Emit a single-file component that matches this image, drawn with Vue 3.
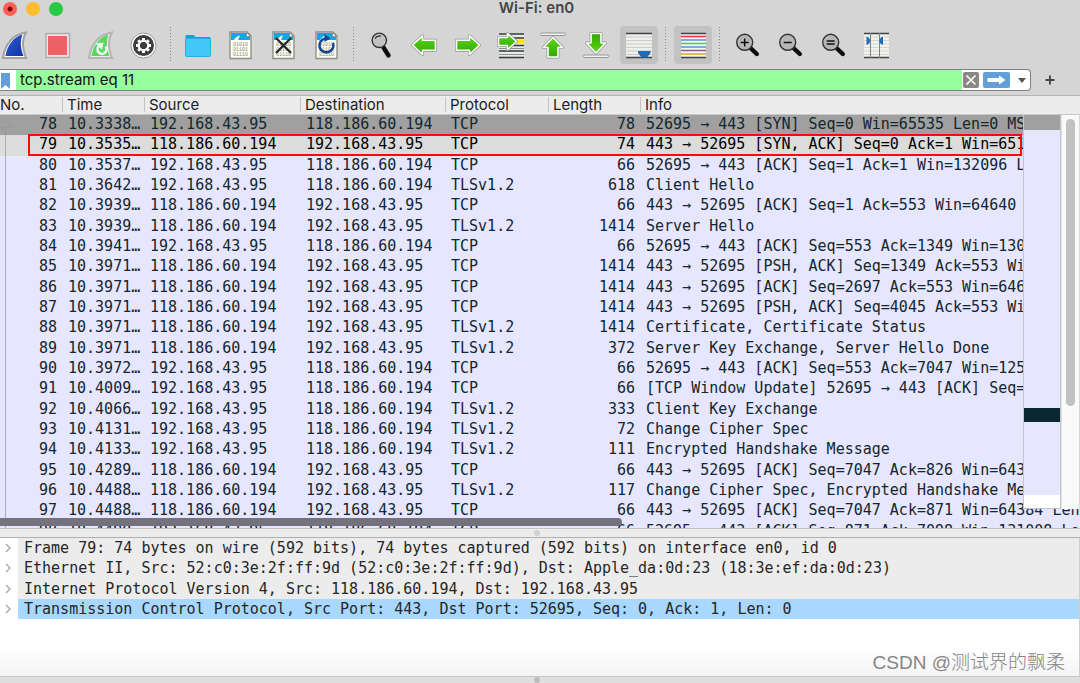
<script setup>
import { ref } from 'vue'

const filter = ref('tcp.stream eq 11')

const A = '192.168.43.95'
const B = '118.186.60.194'
const packets = [
  [78, '10.3338…', A, B, 'TCP', 78, '52695 → 443 [SYN] Seq=0 Win=65535 Len=0 MSS=1460'],
  [79, '10.3535…', B, A, 'TCP', 74, '443 → 52695 [SYN, ACK] Seq=0 Ack=1 Win=65160 Len=0'],
  [80, '10.3537…', A, B, 'TCP', 66, '52695 → 443 [ACK] Seq=1 Ack=1 Win=132096 Len=0'],
  [81, '10.3642…', A, B, 'TLSv1.2', 618, 'Client Hello'],
  [82, '10.3939…', B, A, 'TCP', 66, '443 → 52695 [ACK] Seq=1 Ack=553 Win=64640 Len=0'],
  [83, '10.3939…', B, A, 'TLSv1.2', 1414, 'Server Hello'],
  [84, '10.3941…', A, B, 'TCP', 66, '52695 → 443 [ACK] Seq=553 Ack=1349 Win=130752'],
  [85, '10.3971…', B, A, 'TCP', 1414, '443 → 52695 [PSH, ACK] Seq=1349 Ack=553 Win=64640'],
  [86, '10.3971…', B, A, 'TCP', 1414, '443 → 52695 [ACK] Seq=2697 Ack=553 Win=64640'],
  [87, '10.3971…', B, A, 'TCP', 1414, '443 → 52695 [PSH, ACK] Seq=4045 Ack=553 Win=64640'],
  [88, '10.3971…', B, A, 'TLSv1.2', 1414, 'Certificate, Certificate Status'],
  [89, '10.3971…', B, A, 'TLSv1.2', 372, 'Server Key Exchange, Server Hello Done'],
  [90, '10.3972…', A, B, 'TCP', 66, '52695 → 443 [ACK] Seq=553 Ack=7047 Win=125376'],
  [91, '10.4009…', A, B, 'TCP', 66, '[TCP Window Update] 52695 → 443 [ACK] Seq=553'],
  [92, '10.4066…', A, B, 'TLSv1.2', 333, 'Client Key Exchange'],
  [93, '10.4131…', A, B, 'TLSv1.2', 72, 'Change Cipher Spec'],
  [94, '10.4133…', A, B, 'TLSv1.2', 111, 'Encrypted Handshake Message'],
  [95, '10.4289…', B, A, 'TCP', 66, '443 → 52695 [ACK] Seq=7047 Ack=826 Win=64384 Len=0'],
  [96, '10.4488…', B, A, 'TLSv1.2', 117, 'Change Cipher Spec, Encrypted Handshake Message'],
  [97, '10.4488…', B, A, 'TCP', 66, '443 → 52695 [ACK] Seq=7047 Ack=871 Win=64384 Len=0'],
  [98, '10.4490…', A, B, 'TCP', 66, '52695 → 443 [ACK] Seq=871 Ack=7098 Win=131008 Len=0'],
]

const details = [
  'Frame 79: 74 bytes on wire (592 bits), 74 bytes captured (592 bits) on interface en0, id 0',
  'Ethernet II, Src: 52:c0:3e:2f:ff:9d (52:c0:3e:2f:ff:9d), Dst: Apple_da:0d:23 (18:3e:ef:da:0d:23)',
  'Internet Protocol Version 4, Src: 118.186.60.194, Dst: 192.168.43.95',
  'Transmission Control Protocol, Src Port: 443, Dst Port: 52695, Seq: 0, Ack: 1, Len: 0',
]

const tools = [
  'start', 'stop', 'restart', 'options', '|',
  'open', 'save', 'close', 'reload', '|',
  'find', 'back', 'forward', 'goto', 'first', 'last', 'autoscroll', '|',
  'colorize', '|',
  'zoom in', 'zoom out', 'zoom reset', 'resize columns',
]
const pressed = ['autoscroll', 'colorize']
const teeth = [0, 45, 90, 135, 180, 225, 270, 315]
const stripes = [
  [10.5, '#fb2c36'], [14, '#5a93cf'], [17.5, '#4fd022'],
  [21, '#5a93cf'], [24.5, '#8c5a93'], [28, '#d9a628'],
]
</script>

<template>
  <div class="window">
    <header class="titlebar">
      <div class="lights">
        <button class="light red" aria-label="Close window"></button>
        <button class="light amber" aria-label="Minimize window"></button>
        <button class="light green" aria-label="Zoom window"></button>
      </div>
      <h1>Wi-Fi: en0</h1>
    </header>

    <nav class="toolbar">
      <template v-for="(t, i) in tools" :key="i">
        <span v-if="t === '|'" class="sep"></span>
        <button v-else class="tool" :class="{ pressed: pressed.includes(t) }" :aria-label="t">
          <svg viewBox="0 0 38 38" width="38" height="38" fill="none">
            <defs v-if="t === 'start'">
              <linearGradient id="blue" x1="0" y1="0" x2="1" y2="1">
                <stop offset="0" stop-color="#2f62cf" /><stop offset="1" stop-color="#1030a8" />
              </linearGradient>
              <linearGradient id="leaf" x1="0" y1="0" x2="0" y2="1">
                <stop offset="0" stop-color="#5fd615" /><stop offset="1" stop-color="#2fa800" />
              </linearGradient>
            </defs>

            <g v-if="t === 'start' || t === 'restart'">
              <path d="M7 32 C9 18 17 8 30 6.5 C26 13 26 23 30 32 Z" :stroke="t === 'start' ? '#a2a2a2' : '#b4b4b4'" stroke-width="2" :fill="t === 'start' ? '#fff' : '#ececec'" />
              <path d="M9.5 30 C11 19 18 10.5 26.5 8.5 C24 15 24.5 23 27.5 30 Z" :fill="t === 'start' ? 'url(#blue)' : '#56d95e'" />
              <g v-if="t === 'restart'">
                <path d="M16.500 20.500 A4.500 4.500 0 1 0 23.500 20.500" stroke="#f4f4f4" stroke-width="2.600" />
                <path d="M13.500 17.500 L21.500 16.500 L20 24 Z" fill="#f4f4f4" />
              </g>
            </g>

            <g v-else-if="t === 'stop'">
              <rect x="7" y="7.5" width="23.5" height="24" fill="#e6e6e6" stroke="#aaa" stroke-width="1.4" />
              <rect x="9" y="10" width="19" height="19" fill="#ec6266" />
            </g>

            <g v-else-if="t === 'options'">
              <circle cx="18.5" cy="19.5" r="12.5" fill="#fff" stroke="#999" />
              <circle cx="18.5" cy="19.5" r="10.5" fill="#3c3c3c" />
              <rect v-for="a in teeth" :key="a" x="17" y="12" width="3" height="4" fill="#fff" :transform="`rotate(${a} 18.5 19.5)`" />
              <circle cx="18.5" cy="19.5" r="4.9" stroke="#fff" stroke-width="1.8" />
            </g>

            <g v-else-if="t === 'open'">
              <path d="M6.5 10 q0 -1 1 -1 h7 l2 2 h14 q1 0 1 1 v4 h-25 z" fill="#1ba0d6" />
              <rect x="6.5" y="12.5" width="25" height="18" rx="1" fill="#44c8fb" stroke="#27aee4" />
            </g>

            <g v-else-if="['save', 'close', 'reload'].includes(t)">
              <path d="M8 6 H25 L29 10 V32.5 H8 Z" fill="#fefdf0" stroke="#8f9088" stroke-width="1.4" />
              <path d="M9 7 H24 L28 11 V14 H16 L18 9.5 Q14 10 12 14 H9 Z" fill="#16a5e3" />
              <path d="M24.5 6.5 V10.5 H28.5 Z" fill="#fff" stroke="#8f9088" />
              <g class="bits">
                <text x="11" y="20">01010</text>
                <text x="11" y="25">01101</text>
                <text x="11" y="30">01110</text>
              </g>
              <path v-if="t === 'close'" d="M11 12 L26 27 M26 12 L11 27" stroke="#252a2e" stroke-width="2.3" />
              <g v-if="t === 'reload'">
                <path d="M25 17 A7 7 0 1 1 17 12.500" stroke="#154690" stroke-width="2.500" />
                <path d="M16.500 8 L22.500 12.500 L16.500 16 Z" fill="#154690" />
              </g>
            </g>

            <g v-else-if="t === 'find'">
              <path d="M21.5 21.5 L26.5 29.500" stroke="#0c0c0c" stroke-width="4.4" stroke-linecap="round" />
              <circle cx="17.3" cy="14.3" r="7.2" fill="#c2c2c2" stroke="#333" stroke-width="1.4" />
              <path d="M13 12.5 Q15 9.5 19 10" stroke="#222" stroke-width="1.2" />
            </g>

            <g v-else-if="t === 'back' || t === 'forward'" :transform="t === 'forward' ? 'translate(39 0) scale(-1 1)' : undefined">
              <path d="M7.500 19 L17.500 9.800 V14.200 H30.500 V24.200 H17.500 V28.500 Z" stroke="#949494" stroke-width="3" stroke-linejoin="round" />
              <path d="M7.500 19 L17.500 9.800 V14.200 H30.500 V24.200 H17.500 V28.500 Z" fill="url(#leaf)" stroke="#fff" stroke-width="1.6" stroke-linejoin="round" />
            </g>

            <g v-else-if="t === 'goto'">
              <rect x="8" y="7" width="25" height="25" fill="#e9e9e6" />
              <path d="M8 8 H33 M8 12 H33 M8 19.5 H33 M8 25 H33 M8 31.5 H33" stroke="#30383b" stroke-width="1.3" />
              <path d="M8 22.5 H33 M8 28.5 H33" stroke="#88908e" />
              <rect x="24" y="13.5" width="9" height="4" fill="#ffe500" />
              <path d="M7.5 11.5 H16.5 V7.5 L25.5 15.5 L16.5 23.5 V19.5 H7.5 Z" stroke="#949494" stroke-width="3" stroke-linejoin="round" />
              <path d="M7.5 11.5 H16.5 V7.5 L25.5 15.5 L16.5 23.5 V19.5 H7.5 Z" fill="url(#leaf)" stroke="#fff" stroke-width="1.5" stroke-linejoin="round" />
            </g>

            <g v-else-if="t === 'first' || t === 'last'" :transform="t === 'last' ? 'translate(0 38.500) scale(1 -1)' : undefined">
              <rect x="6.5" y="7" width="25" height="2.5" rx="1.2" fill="#f4f4f4" stroke="#949494" />
              <path d="M19 11.5 L28.5 21.5 H24 V31 H14 V21.5 H9.5 Z" stroke="#949494" stroke-width="3" stroke-linejoin="round" />
              <path d="M19 11.5 L28.5 21.5 H24 V31 H14 V21.5 H9.5 Z" fill="url(#leaf)" stroke="#fff" stroke-width="1.6" stroke-linejoin="round" />
            </g>

            <g v-else-if="t === 'autoscroll'">
              <rect x="6" y="7" width="26" height="25" fill="#efefec" />
              <path d="M6 11 H32 M6 14.5 H32 M6 18 H32 M6 21.5 H32 M6 25 H32 M6 28.5 H32" stroke="#cbcdc8" />
              <path d="M6 7.5 H32 M6 31.5 H32" stroke="#3c4446" stroke-width="1.3" />
              <path d="M18 25 H30.5 V27 L27 31.5 H21.5 L18 27 Z" fill="#1f6bb5" />
            </g>

            <g v-else-if="t === 'colorize'">
              <rect x="7" y="7" width="25" height="25" fill="#f6f6f4" />
              <path d="M7 7.5 H32 M7 31.5 H32" stroke="#3c4446" stroke-width="1.3" />
              <path v-for="s in stripes" :key="s[0]" :d="`M7 ${s[0]} H32`" :stroke="s[1]" stroke-width="1.5" />
            </g>

            <g v-else-if="t.startsWith('zoom')">
              <path d="M23 22.5 L28.8 28" stroke="#0c0c0c" stroke-width="4.4" stroke-linecap="round" />
              <circle cx="16.7" cy="16.3" r="8" fill="#b6b6b6" stroke="#333" stroke-width="1.4" />
              <path v-if="t !== 'zoom reset'" d="M12.7 16.5 H20.7" stroke="#111" stroke-width="1.5" />
              <path v-else d="M12.7 15 H20.7 M12.7 18 H20.7" stroke="#111" stroke-width="1.3" />
              <path v-if="t === 'zoom in'" d="M16.7 12.5 V20.5" stroke="#111" stroke-width="1.5" />
            </g>

            <g v-else>
              <rect x="7" y="7" width="25" height="25" fill="#f3f3ee" />
              <path d="M7 11 H32 M7 14.5 H32 M7 18 H32 M7 21.5 H32 M7 25 H32 M7 28.5 H32" stroke="#d2d4cf" />
              <path d="M7 7.5 H32 M7 31.5 H32" stroke="#3c4446" stroke-width="1.3" />
              <path d="M13.5 7 V32 M22.5 7 V32" stroke="#7d827f" />
              <path d="M9.5 10.7 Q13 11.5 13 14.7 Q13 18 9.5 18.7 Z M26 10.7 Q22.5 11.5 22.5 14.7 Q22.5 18 26 18.7 Z" fill="#1f6bb5" />
            </g>
          </svg>
        </button>
      </template>
    </nav>

    <form class="filterbar" @submit.prevent>
      <div class="field">
        <button type="button" class="bookmark" aria-label="Filter bookmarks">
          <svg width="10" height="17" viewBox="0 0 10 17"><path d="M0 0 H9 V16 L4.5 12 L0 16 Z" fill="#639fd6" /></svg>
        </button>
        <input v-model="filter" type="text" aria-label="Display filter" />
        <button type="button" class="clear" aria-label="Clear filter">
          <svg width="16" height="16" viewBox="0 0 16 16"><path d="M3.5 3.5 L12.5 12.5 M12.5 3.5 L3.5 12.5" stroke="#fff" stroke-width="1.6" /></svg>
        </button>
        <button type="submit" class="apply" aria-label="Apply filter">
          <svg width="27" height="16" viewBox="0 0 27 16"><path d="M4.5 6 H16 V3.5 L22.5 8 L16 12.5 V10 H4.5 Z" fill="#fff" /></svg>
        </button>
        <button type="button" class="recent" aria-label="Recent filters">
          <svg width="8" height="5" viewBox="0 0 8 5"><path d="M0 0 H8 L4 5 Z" fill="#555" /></svg>
        </button>
      </div>
      <button type="button" class="add" aria-label="Add filter button">
        <svg width="10" height="10" viewBox="0 0 10 10"><path d="M5 0.5 V9.5 M0.5 5 H9.5" stroke="#444" stroke-width="1.8" /></svg>
      </button>
    </form>

    <main class="packets">
      <table>
        <colgroup>
          <col class="c-no" /><col class="c-time" /><col class="c-src" /><col class="c-dst" />
          <col class="c-proto" /><col class="c-len" /><col />
        </colgroup>
        <thead>
          <tr>
            <th>No.</th><th>Time</th><th>Source</th><th>Destination</th><th>Protocol</th><th>Length</th><th>Info</th>
          </tr>
        </thead>
        <tbody>
          <tr v-for="p in packets" :key="p[0]" :class="{ syn: p[0] === 78, current: p[0] === 79 }">
            <td v-for="(v, i) in p" :key="i" :class="{ num: i === 0 || i === 5 }">{{ v }}</td>
          </tr>
        </tbody>
      </table>
      <svg class="thread" width="14" height="420" viewBox="0 0 14 420" fill="none">
        <path d="M5.5 420 V14 M0 12.5 H14 M2 14 L12 8" stroke="#8d9aa0" stroke-opacity="0.7" />
      </svg>
      <div class="highlight"></div>
      <div class="minimap"><span class="mark-top"></span><span class="mark"></span></div>
      <div class="vscroll"><span></span></div>
      <div class="hscroll"></div>
    </main>

    <div class="splitter"><span></span></div>

    <section class="details">
      <ul>
        <li v-for="(d, i) in details" :key="d" :class="{ selected: i === 3 }">
          <button class="twist" aria-label="Expand">
            <svg width="6" height="10" viewBox="0 0 6 10" fill="none"><path d="M1 1 L5 5 L1 9" stroke="#a8a8a8" stroke-width="1.4" /></svg>
          </button>
          <span class="line">{{ d }}</span>
        </li>
      </ul>
      <p class="credit">CSDN @测试界的飘柔</p>
    </section>

    <div class="splitter bottom"><span></span></div>
  </div>
</template>

<style>
body {
  margin: 0;
  overflow: hidden;
}
</style>

<style scoped>
* {
  box-sizing: border-box;
}
button {
  padding: 0;
  border: 0;
  background: none;
}
svg {
  display: block;
}
.window {
  display: flex;
  flex-direction: column;
  height: 100vh;
  overflow: hidden;
  background: #d5d5d5;
  font-family: Inter, "Liberation Sans", sans-serif;
  font-size: 15px;
  color: #1c1c1c;
}
.titlebar {
  position: relative;
  flex: none;
  height: 20px;
}
.titlebar h1 {
  margin: 0;
  padding-right: 7px;
  text-align: center;
  font-size: 15px;
  line-height: 16px;
  font-weight: 600;
  color: #454545;
}
.lights {
  position: absolute;
  left: 3px;
  top: 2px;
  display: flex;
  gap: 9px;
}
.light {
  width: 14px;
  height: 14px;
  border-radius: 50%;
}
.light.red {
  background: radial-gradient(circle, #7a0a06 0 2px, #fe5f57 3px);
}
.light.amber {
  background: #febc2e;
}
.light.green {
  background: #28c840;
}
.toolbar {
  flex: none;
  display: flex;
  align-items: center;
  gap: 5px;
  height: 49px;
  margin-left: -4px;
}
.tool {
  flex: none;
  width: 38px;
  height: 38px;
  border-radius: 4px;
}
.tool.pressed {
  background: #c2c2c2;
}
.sep {
  flex: none;
  width: 6px;
  height: 36px;
  background: repeating-linear-gradient(#8a8a8a 0 1px, transparent 1px 3px) 2px 0 / 1px 100% no-repeat;
}
.bits {
  font-family: "Liberation Mono", monospace;
  font-size: 5px;
  fill: #8d8d80;
}
.filterbar {
  flex: none;
  display: flex;
  align-items: center;
  height: 27px;
  padding-bottom: 4px;
  border-bottom: 1px solid #b4b4b4;
}
.field {
  flex: 1;
  display: flex;
  align-items: center;
  height: 22px;
  border: 1px solid #7f7f7f;
  border-left: 0;
  border-radius: 0 4px 4px 0;
  background: #fff;
}
.bookmark {
  width: 16px;
  padding: 2px 0 0 1px;
}
.field input {
  flex: 1;
  min-width: 0;
  height: 20px;
  padding: 0 4px;
  border: 0;
  border-radius: 0;
  outline: 0;
  background: #98ff9f;
  font: 15px/20px Inter, "Liberation Sans", sans-serif;
  color: #111;
}
.clear {
  width: 16px;
  height: 16px;
  margin: 0 4px 0 1px;
  border-radius: 2px;
  background: #888983;
}
.apply {
  width: 27px;
  height: 16px;
  border-radius: 2px;
  background: #629fd6;
}
.recent {
  padding: 0 4px 0 8px;
}
.add {
  width: 49px;
  padding-left: 14px;
}
.packets {
  position: relative;
  flex: 432 1 0;
  min-height: 0;
  overflow: hidden;
  background: #e7e6ff;
}
table {
  width: 100%;
  height: 446px;
  table-layout: fixed;
  border-collapse: collapse;
}
.c-no { width: 62px; }
.c-time { width: 82px; }
.c-src { width: 156px; }
.c-dst { width: 145px; }
.c-proto { width: 103px; }
.c-len { width: 92px; }
thead tr {
  height: 19px;
  background: linear-gradient(#ececec 0 18px, #c9c9c9 18px);
}
th {
  padding: 0 0 1px 5px;
  height: 19px;
  text-align: left;
  font-weight: 400;
  font-size: 15px;
  line-height: 18px;
  background: linear-gradient(#c4c4c4, #c4c4c4) 0 1px / 1px 15px no-repeat;
}
th:first-child {
  padding-left: 0;
  background: none;
}
td {
  padding: 0 0 2px 6px;
  overflow: hidden;
  white-space: nowrap;
  font: 15px/18px "DejaVu Sans Mono", "Liberation Mono", monospace;
  color: #12272e;
}
td.num {
  padding: 0 5px 2px 0;
  text-align: right;
}
.syn {
  background: #a0a0a0;
}
.current {
  background: #dcdcdc;
}
.current td {
  color: #000;
}
.thread {
  position: absolute;
  left: 0;
  top: 19px;
}
.highlight {
  position: absolute;
  left: 28px;
  right: 58px;
  top: 38px;
  height: 22px;
  border: 2px solid #f60b0b;
}
.minimap {
  position: absolute;
  right: 19px;
  top: 19px;
  bottom: 19px;
  width: 38px;
  border: 1px solid #c4c4d0;
  border-top: 0;
  background: linear-gradient(#e7e6ff 0 380px, #fff 380px);
}
.mark-top,
.mark {
  position: absolute;
  left: 0;
  right: 0;
  top: 0;
  height: 15px;
  background: #a0a0a0;
}
.mark {
  top: 293px;
  height: 14px;
  background: #0b272f;
}
.vscroll {
  position: absolute;
  right: 0;
  top: 19px;
  bottom: 19px;
  width: 19px;
  border-left: 1px solid #e0e0e0;
  border-right: 1px solid #d8d8d8;
  background: #fafafa;
}
.vscroll span {
  position: absolute;
  left: 4px;
  top: 4px;
  width: 9px;
  height: 287px;
  border-radius: 5px;
  background: #c1c1c1;
}
.hscroll {
  position: absolute;
  left: 0;
  bottom: 2px;
  width: 622px;
  height: 8px;
  border-radius: 0 4px 4px 0;
  background: #73727d;
}
.splitter {
  flex: none;
  display: flex;
  align-items: center;
  justify-content: center;
  height: 10px;
  padding-right: 6px;
  border-top: 1px solid #c4c4c4;
  border-bottom: 1px solid #b0b0b0;
  background: #ececec;
}
.splitter span {
  width: 6px;
  height: 6px;
  border-radius: 50%;
  background: #d0d0d0;
}
.splitter.bottom {
  height: 7px;
  border-bottom: 0;
  background: #dfdfdf;
}
.splitter.bottom span {
  background: #bdbdbd;
}
.details {
  position: relative;
  flex: 138 1 0;
  border-right: 1px solid #cfcfcf;
  background: linear-gradient(#fff 80%, #f4f4f4);
}
.details ul {
  display: flex;
  flex-direction: column;
  height: 81px;
  margin: 0;
  padding: 0;
  list-style: none;
}
.details li {
  flex: 1;
  display: flex;
  align-items: stretch;
}
.twist {
  display: flex;
  flex: none;
  align-items: center;
  width: 18px;
  padding-left: 5px;
}
.line {
  flex: 1;
  padding-left: 6px;
  overflow: hidden;
  white-space: nowrap;
  background: #ececec;
  font: 15px/20px "DejaVu Sans Mono", "Liberation Mono", monospace;
  color: #262626;
}
.selected .line {
  background: #a8d8ff;
}
.credit {
  position: absolute;
  right: 14px;
  bottom: 0;
  margin: 0;
  font: 300 19px/26px "Liberation Sans", "Noto Sans CJK SC", sans-serif;
  color: #858585;
}
</style>
